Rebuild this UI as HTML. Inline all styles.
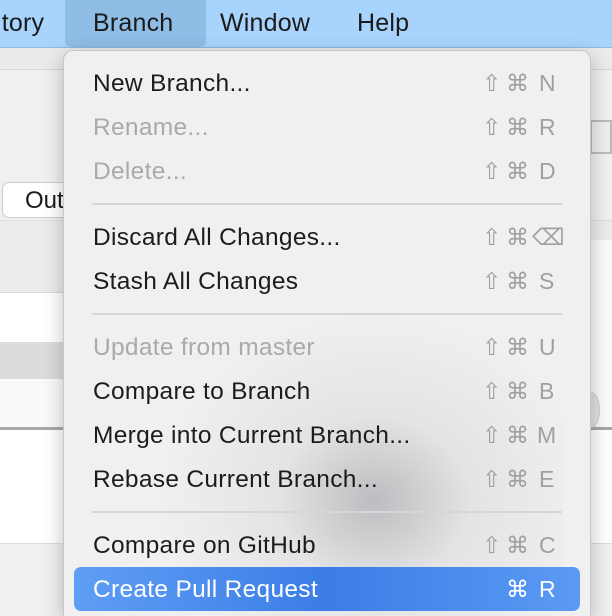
<!DOCTYPE html>
<html><head><meta charset="utf-8"><style>
*{margin:0;padding:0;box-sizing:border-box}
body{width:612px;height:616px;overflow:hidden;position:relative;background:#f4f4f4;font-family:"Liberation Sans",sans-serif}
.abs{position:absolute}
.bar{left:0;top:0;width:612px;height:48px;background:#a8d3fc;border-bottom:1px solid #8fb6dc}
.bar span{position:absolute;top:9px;font-size:25px;color:#1a1a1a;letter-spacing:0.2px}
.menu{left:63px;top:50px;width:528px;height:566px;background:#f0f0f0;border-radius:10px 10px 0 0;border:1px solid #c8c8c8;border-bottom:none;box-shadow:0 6px 20px rgba(0,0,0,.25);overflow:hidden}
.it{position:absolute;left:29px;font-size:24.5px;letter-spacing:0.3px;color:#1c1c1c;white-space:nowrap}
.dis{color:#aaa}
.sc{position:absolute;left:418px;width:80px;height:30px;font-size:23px;color:#a0a0a0;white-space:nowrap}
.sc b{position:absolute;font-weight:normal}
.sep{position:absolute;left:28px;right:28px;height:2px;background:#d6d6d6}
</style></head><body>
<div class="abs" style="left:0;top:48px;width:612px;height:21px;background:#ebebeb"></div>
<div class="abs" style="left:0;top:69px;width:612px;height:1px;background:#d4d4d4"></div>
<div class="abs" style="left:0;top:70px;width:612px;height:150px;background:#f0f0f0"></div>
<div class="abs" style="left:2px;top:182px;width:70px;height:36px;background:#fff;border:1px solid #ccc;border-radius:7px;font-size:24px;padding:4px 0 0 22px;color:#1a1a1a">Out</div>
<div class="abs" style="left:0;top:220px;width:612px;height:72px;background:#ececec;border-top:1px solid #ddd"></div>
<div class="abs" style="left:0;top:292px;width:612px;height:50px;background:#fff;border-top:1px solid #d8d8d8"></div>
<div class="abs" style="left:0;top:342px;width:612px;height:37px;background:#dcdcdc"></div>
<div class="abs" style="left:0;top:379px;width:612px;height:48px;background:#fafafa"></div>
<div class="abs" style="left:0;top:427px;width:612px;height:3px;background:#a8a8a8"></div>
<div class="abs" style="left:0;top:430px;width:612px;height:113px;background:#fff"></div>
<div class="abs" style="left:0;top:543px;width:612px;height:73px;background:#f0f0f0;border-top:1px solid #ddd"></div>
<div class="abs" style="left:590px;top:120px;width:22px;height:34px;border:2px solid #bbb;background:#eee"></div>
<div class="abs" style="left:590px;top:240px;width:22px;height:142px;background:#fafafa"></div>
<div class="abs" style="left:582px;top:392px;width:18px;height:36px;border-radius:50%;background:#e2e2e2;border:1px solid #ccc"></div>

<div class="abs bar">
<span style="left:-4px">itory</span>
<div class="abs" style="left:65px;top:0;width:141px;height:47px;background:#8fbde6;border-radius:0 0 6px 6px"></div>
<span style="left:93px">Branch</span>
<span style="left:220px">Window</span>
<span style="left:357px">Help</span>
</div>

<div class="abs menu">
<div class="abs" style="left:60px;top:260px;width:440px;height:306px;background:radial-gradient(440px 380px at 57% 62%,rgba(100,105,112,.38),rgba(150,153,158,.14) 22%,rgba(240,240,240,0) 50%)"></div>
<div class="it" style="top:19px">New Branch...</div><div class="sc" style="top:19px"><b style="left:0">⇧</b><b style="left:24px">⌘</b><b style="left:57px">N</b></div>
<div class="it dis" style="top:63px">Rename...</div><div class="sc" style="top:63px"><b style="left:0">⇧</b><b style="left:24px">⌘</b><b style="left:57px">R</b></div>
<div class="it dis" style="top:107px">Delete...</div><div class="sc" style="top:107px"><b style="left:0">⇧</b><b style="left:24px">⌘</b><b style="left:57px">D</b></div>
<div class="sep" style="top:152px"></div>
<div class="it" style="top:173px">Discard All Changes...</div><div class="sc" style="top:173px"><b style="left:0">⇧</b><b style="left:24px">⌘</b><b style="left:50px">⌫</b></div>
<div class="it" style="top:217px">Stash All Changes</div><div class="sc" style="top:217px"><b style="left:0">⇧</b><b style="left:24px">⌘</b><b style="left:57px">S</b></div>
<div class="sep" style="top:262px"></div>
<div class="it dis" style="top:283px">Update from master</div><div class="sc" style="top:283px"><b style="left:0">⇧</b><b style="left:24px">⌘</b><b style="left:57px">U</b></div>
<div class="it" style="top:327px">Compare to Branch</div><div class="sc" style="top:327px"><b style="left:0">⇧</b><b style="left:24px">⌘</b><b style="left:57px">B</b></div>
<div class="it" style="top:371px">Merge into Current Branch...</div><div class="sc" style="top:371px"><b style="left:0">⇧</b><b style="left:24px">⌘</b><b style="left:55px">M</b></div>
<div class="it" style="top:415px">Rebase Current Branch...</div><div class="sc" style="top:415px"><b style="left:0">⇧</b><b style="left:24px">⌘</b><b style="left:57px">E</b></div>
<div class="sep" style="top:460px"></div>
<div class="it" style="top:481px">Compare on GitHub</div><div class="sc" style="top:481px"><b style="left:0">⇧</b><b style="left:24px">⌘</b><b style="left:57px">C</b></div>
<div class="abs" style="left:10px;top:516px;width:506px;height:44px;border-radius:7px;background:linear-gradient(90deg,#5f9ef5,#3b7de6 50%,#5b9af3)"></div>
<div class="it" style="top:525px;color:#fff">Create Pull Request</div><div class="sc" style="top:525px;color:#fff"><b style="left:24px">⌘</b><b style="left:57px">R</b></div>
</div>
</body></html>
